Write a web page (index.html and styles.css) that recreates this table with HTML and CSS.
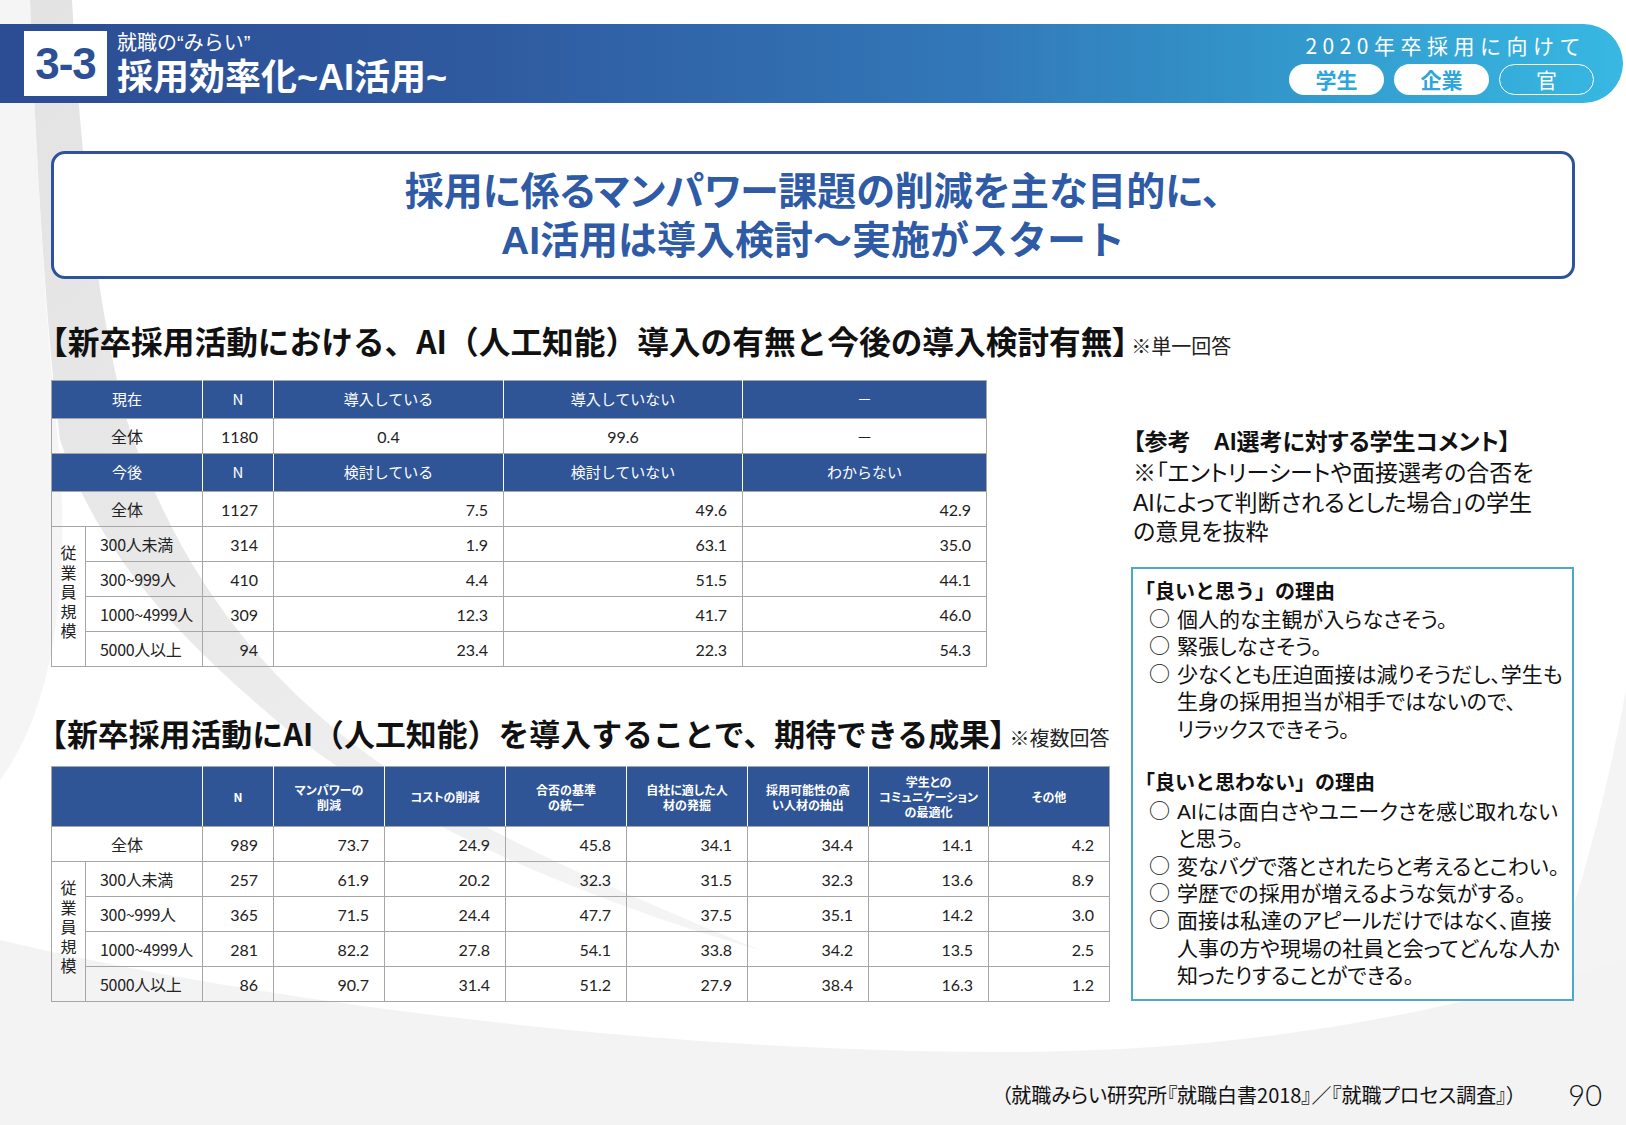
FILE: index.html
```html
<!DOCTYPE html>
<html lang="ja">
<head>
<meta charset="utf-8">
<title>採用効率化~AI活用~</title>
<link rel="stylesheet" href="styles.css">
</head>
<body>
<div class="page">
  <svg class="bg" width="1626" height="1125" viewBox="0 0 1626 1125" aria-hidden="true">
    <defs>
      <linearGradient id="sw" x1="0" y1="0" x2="0.7" y2="1">
        <stop offset="0" stop-color="#e3e3e3"/>
        <stop offset="0.55" stop-color="#e9e9e9"/>
        <stop offset="1" stop-color="#f4f4f4"/>
      </linearGradient>
    </defs>
    <rect width="1626" height="1125" fill="#ffffff"/>
    <path d="M0 0 H30 C36 150 45 320 58 440 C70 560 60 700 0 780 Z" fill="#f5f5f5"/>
    <path d="M30 0 H72 C80 160 100 330 130 430 C180 570 260 690 420 790 C520 850 640 900 760 950 C600 905 420 830 300 740 C190 650 100 560 60 440 C45 320 36 150 30 0 Z" fill="url(#sw)"/>
    <path d="M0 940 C250 1000 650 1052 1000 1052 C1260 1052 1460 1010 1626 955 V1125 H0 Z" fill="#f3f3f3"/>
    <path d="M1626 690 C1605 800 1580 900 1545 985 L1626 958 Z" fill="#f4f4f4"/>
  </svg>

  <header class="topbar">
    <div class="chapter">3-3</div>
    <div class="titles">
      <div class="kicker">就職の“みらい”</div>
      <h1 class="title">採用効率化~AI活用~</h1>
    </div>
    <div class="aside">
      <div class="year">2020年卒採用に向けて</div>
      <div class="pills">
        <span class="pill pill-on">学生</span>
        <span class="pill pill-on">企業</span>
        <span class="pill pill-off">官</span>
      </div>
    </div>
  </header>

  <section class="headline">
    <p class="hl-line">採用に係るマンパワー課題の削減を主な目的に、</p>
    <p class="hl-line hl-wide">AI活用は導入検討～実施がスタート</p>
  </section>

  <div class="content">
    <div class="left">
      <h2 class="sec">【新卒採用活動における、AI（人工知能）導入の有無と今後の導入検討有無<span class="br">】</span><span class="note">※単一回答</span></h2>
      <table class="tbl t1">
        <colgroup>
          <col class="w-sub"><col class="w-lbl"><col class="w-n"><col class="w-a"><col class="w-b"><col class="w-c">
        </colgroup>
        <tr class="hd">
          <th colspan="2">現在</th><th>N</th><th>導入している</th><th>導入していない</th><th>－</th>
        </tr>
        <tr class="row">
          <td colspan="2" class="lbl">全体</td><td class="num">1180</td><td class="ctr">0.4</td><td class="ctr">99.6</td><td class="ctr">－</td>
        </tr>
        <tr class="hd">
          <th colspan="2">今後</th><th>N</th><th>検討している</th><th>検討していない</th><th>わからない</th>
        </tr>
        <tr class="row">
          <td colspan="2" class="lbl">全体</td><td class="num">1127</td><td class="num">7.5</td><td class="num">49.6</td><td class="num">42.9</td>
        </tr>
        <tr class="row">
          <td rowspan="4" class="vert"><span>従業員規模</span></td><td class="sz">300人未満</td><td class="num">314</td><td class="num">1.9</td><td class="num">63.1</td><td class="num">35.0</td>
        </tr>
        <tr class="row">
          <td class="sz">300~999人</td><td class="num">410</td><td class="num">4.4</td><td class="num">51.5</td><td class="num">44.1</td>
        </tr>
        <tr class="row">
          <td class="sz">1000~4999人</td><td class="num">309</td><td class="num">12.3</td><td class="num">41.7</td><td class="num">46.0</td>
        </tr>
        <tr class="row">
          <td class="sz">5000人以上</td><td class="num">94</td><td class="num">23.4</td><td class="num">22.3</td><td class="num">54.3</td>
        </tr>
      </table>

      <h2 class="sec sec2">【新卒採用活動にAI（人工知能）を導入することで、期待できる成果<span class="br">】</span><span class="note">※複数回答</span></h2>
      <table class="tbl t2">
        <colgroup>
          <col class="w-sub"><col class="w-lbl"><col class="w-n"><col class="w-m1"><col class="w-m"><col class="w-m"><col class="w-m"><col class="w-m"><col class="w-m2"><col class="w-m">
        </colgroup>
        <tr class="hd2">
          <th colspan="2"></th><th>N</th><th>マンパワーの<br>削減</th><th>コストの削減</th><th>合否の基準<br>の統一</th><th>自社に適した人<br>材の発掘</th><th>採用可能性の高<br>い人材の抽出</th><th>学生との<br>コミュニケーション<br>の最適化</th><th>その他</th>
        </tr>
        <tr class="row">
          <td colspan="2" class="lbl">全体</td><td class="num">989</td><td class="num">73.7</td><td class="num">24.9</td><td class="num">45.8</td><td class="num">34.1</td><td class="num">34.4</td><td class="num">14.1</td><td class="num">4.2</td>
        </tr>
        <tr class="row">
          <td rowspan="4" class="vert"><span>従業員規模</span></td><td class="sz">300人未満</td><td class="num">257</td><td class="num">61.9</td><td class="num">20.2</td><td class="num">32.3</td><td class="num">31.5</td><td class="num">32.3</td><td class="num">13.6</td><td class="num">8.9</td>
        </tr>
        <tr class="row">
          <td class="sz">300~999人</td><td class="num">365</td><td class="num">71.5</td><td class="num">24.4</td><td class="num">47.7</td><td class="num">37.5</td><td class="num">35.1</td><td class="num">14.2</td><td class="num">3.0</td>
        </tr>
        <tr class="row">
          <td class="sz">1000~4999人</td><td class="num">281</td><td class="num">82.2</td><td class="num">27.8</td><td class="num">54.1</td><td class="num">33.8</td><td class="num">34.2</td><td class="num">13.5</td><td class="num">2.5</td>
        </tr>
        <tr class="row">
          <td class="sz">5000人以上</td><td class="num">86</td><td class="num">90.7</td><td class="num">31.4</td><td class="num">51.2</td><td class="num">27.9</td><td class="num">38.4</td><td class="num">16.3</td><td class="num">1.2</td>
        </tr>
      </table>
    </div>

    <aside class="right">
      <h3 class="ref-title">【参考　AI選考に対する学生コメント】</h3>
      <p class="desc">※「エントリーシートや面接選考の合否を<br>AIによって判断されるとした場合」の学生<br>の意見を抜粋</p>
      <div class="box">
        <p class="bh">「良いと思う」の理由</p>
        <ul class="items">
          <li>個人的な主観が入らなさそう。</li>
          <li>緊張しなさそう。</li>
          <li>少なくとも圧迫面接は減りそうだし、学生も<br>生身の採用担当が相手ではないので、<br>リラックスできそう。</li>
        </ul>
        <p class="bh bh-gap">「良いと思わない」の理由</p>
        <ul class="items">
          <li>AIには面白さやユニークさを感じ取れない<br>と思う。</li>
          <li>変なバグで落とされたらと考えるとこわい。</li>
          <li>学歴での採用が増えるような気がする。</li>
          <li>面接は私達のアピールだけではなく、直接<br>人事の方や現場の社員と会ってどんな人か<br>知ったりすることができる。</li>
        </ul>
      </div>
    </aside>
  </div>

  <footer class="footer">
    <span class="source">（就職みらい研究所『就職白書2018』／『就職プロセス調査』）</span>
    <span class="pageno">90</span>
  </footer>
</div>
</body>
</html>
```

FILE: styles.css
```css
* { box-sizing: border-box; margin: 0; padding: 0; }
html, body { width: 1626px; height: 1125px; overflow: hidden; }
body {
  font-family: "Noto Sans CJK JP", "Noto Sans", sans-serif;
  color: #111;
  background: #fff;
}
.page {
  position: relative;
  width: 1626px;
  height: 1125px;
  padding-top: 24px;
}
.bg { position: absolute; left: 0; top: 0; z-index: 0; }
.topbar, .headline, .content, .footer { position: relative; z-index: 1; }

.kicker, .title, .hl-line, .ref-title, .desc, .bh, .items li {
  font-family: "Liberation Sans", "Noto Sans CJK JP", sans-serif;
}

/* ---------- top bar ---------- */
.topbar {
  display: flex;
  align-items: center;
  width: 1623px;
  height: 79px;
  padding: 0 29px 0 24px;
  border-radius: 0 40px 40px 0;
  background: linear-gradient(90deg, #2c4c93 0%, #2f5aa0 30%, #3278b8 60%, #3399cc 80%, #37b8e2 100%);
}
.chapter {
  width: 83px;
  height: 65px;
  background: #fff;
  color: #2d4f96;
  font-family: "Liberation Sans", "Noto Sans", sans-serif;
  font-weight: 700;
  font-size: 44px;
  line-height: 65px;
  text-align: center;
  letter-spacing: -1px;
}
.titles { margin-left: 10px; color: #fff; }
.kicker { font-size: 20px; line-height: 22px; font-weight: 400; }
.title {
  margin-top: 5px;
  font-size: 36px;
  line-height: 37px;
  font-weight: 700;
}
.aside {
  margin-left: auto;
  display: flex;
  flex-direction: column;
  align-items: flex-end;
}
.year {
  color: #fff;
  font-size: 21px;
  line-height: 24px;
  letter-spacing: 5.5px;
  margin-right: 8px;
}
.pills { display: flex; gap: 10px; margin-top: 7px; }
.pill {
  width: 95px;
  height: 31px;
  border-radius: 16px;
  display: flex;
  align-items: center;
  justify-content: center;
  font-size: 21px;
  line-height: 1;
}
.pill-on { background: #fff; color: #2ea6dc; font-weight: 700; }
.pill-off { border: 1.5px solid #fff; color: #fff; font-weight: 400; }

/* ---------- headline ---------- */
.headline {
  margin: 48px 0 0 51px;
  width: 1524px;
  height: 128px;
  border: 3px solid #2d549b;
  border-radius: 14px;
  background: #fff;
  display: flex;
  flex-direction: column;
  align-items: center;
  justify-content: center;
}
.hl-line {
  height: 49px;
  display: flex;
  align-items: center;
  justify-content: center;
  color: #2e5aa6;
  font-size: 39px;
  line-height: 1;
  font-weight: 700;
  font-feature-settings: "palt";
  white-space: nowrap;
  padding-top: 2px;
}
.hl-wide { font-feature-settings: normal; }

/* ---------- content ---------- */
.content { display: flex; margin-top: 41px; }
.left { width: 1131px; padding-left: 51px; }
.sec {
  margin-left: -15px;
  font-size: 31.7px;
  line-height: 40px;
  font-weight: 700;
  white-space: nowrap;
  color: #111;
}
.br { font-feature-settings: "palt"; }
.note { font-size: 20px; font-weight: 400; margin-left: 3px; color: #222; }
.sec2 { margin-top: 46px; font-size: 30.9px; }
.sec2 .note { margin-left: 4px; }

.tbl {
  border-collapse: collapse;
  table-layout: fixed;
  margin-top: 14px;
  color: #222;
}
.t1 { width: 935px; }
.t2 { width: 1058px; margin-top: 8px; }
.w-sub { width: 34px; }
.w-lbl { width: 117px; }
.w-n { width: 71px; }
.w-a { width: 230px; }
.w-b { width: 239px; }
.w-c { width: 244px; }
.w-m1 { width: 111px; }
.w-m { width: 121px; }
.w-m2 { width: 120px; }

.tbl th {
  background: #2f5597;
  color: #fff;
  font-weight: 400;
  font-size: 15px;
  border: 1px solid #a6a6a6;
  border-left-color: #fff;
  border-right-color: #fff;
  text-align: center;
  vertical-align: middle;
}
.tbl th:first-child { border-left-color: #a6a6a6; }
.tbl th:last-child { border-right-color: #a6a6a6; }
.hd { height: 38px; }
.hd th { padding-bottom: 3px; }
.hd2 { height: 60px; }
.hd2 th {
  font-size: 12px;
  line-height: 15px;
  font-weight: 700;
  font-feature-settings: "palt";
}
.row { height: 35px; }
.tbl td {
  border: 1px solid #a6a6a6;
  font-size: 16px;
  vertical-align: middle;
}
.num {
  text-align: right;
  padding-right: 15px;
  font-family: "Lato", "Noto Sans CJK JP", sans-serif;
}
.ctr {
  text-align: center;
  font-family: "Lato", "Noto Sans CJK JP", sans-serif;
}
.lbl { text-align: center; font-size: 16px; }
.sz {
  font-size: 13.5px;
  padding-left: 14px;
  white-space: nowrap;
  letter-spacing: -0.3px;
}
.vert { text-align: center; padding: 0; }
.vert span {
  display: inline-block;
  writing-mode: vertical-rl;
  font-size: 16px;
  letter-spacing: 3.5px;
  line-height: 1;
}

/* ---------- right column ---------- */
.right { width: 443px; margin-top: 107px; }
.ref-title {
  margin-left: 2px;
  font-size: 23px;
  line-height: 30px;
  font-weight: 700;
  white-space: nowrap;
  font-feature-settings: "palt";
}
.desc {
  margin: 2px 0 0 2px;
  font-size: 23px;
  line-height: 29.5px;
  white-space: nowrap;
  font-feature-settings: "palt";
}
.box {
  margin-top: 19px;
  border: 2px solid #4aa9c6;
  background: #fff;
  padding: 10px 8px 9px 11px;
  height: 434px;
}
.bh {
  margin-left: -9px;
  font-size: 20px;
  line-height: 27.4px;
  font-weight: 700;
  white-space: nowrap;
}
.bh-gap { margin-top: 27.4px; }
.items { list-style: none; }
.items li {
  position: relative;
  padding-left: 33px;
  font-size: 21px;
  line-height: 27.4px;
  white-space: nowrap;
  font-feature-settings: "palt";
}
.items li::before {
  content: "○";
  font-family: "Noto Sans CJK JP", sans-serif;
  position: absolute;
  left: 5px;
  top: -2px;
  line-height: 27.4px;
}

/* ---------- footer ---------- */
.footer {
  position: absolute;
  left: 0;
  right: 0;
  top: 1077px;
  display: flex;
  justify-content: flex-end;
  align-items: center;
  padding-right: 24px;
  height: 34px;
}
.source { font-size: 20px; font-feature-settings: "palt"; }
.pageno {
  margin-left: 52px;
  font-size: 29px;
  font-family: "Lato", "Noto Sans", sans-serif;
  font-weight: 300;
}
```
